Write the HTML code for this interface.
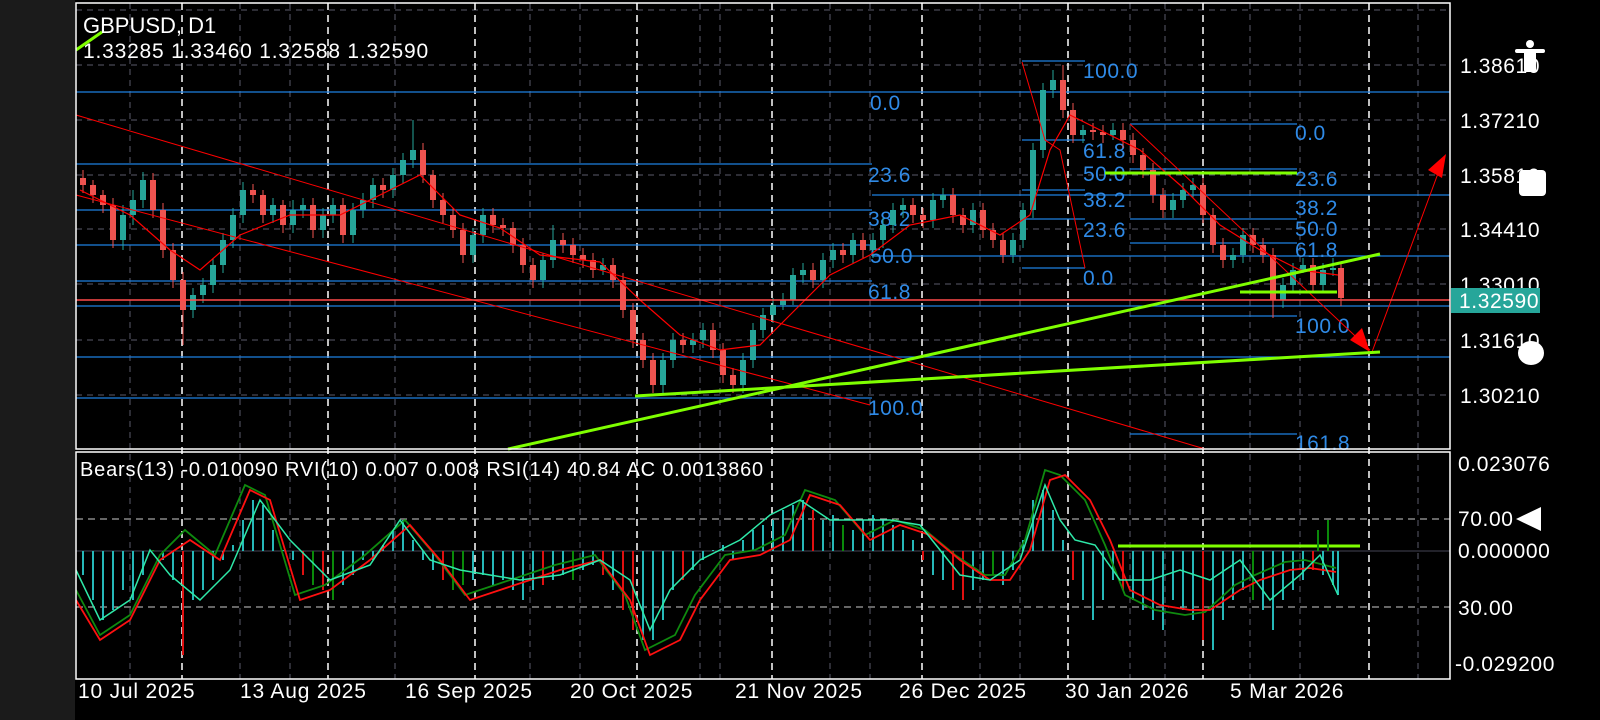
<!DOCTYPE html>
<html><head><meta charset="utf-8"><style>
html,body{margin:0;padding:0;background:#000;width:1600px;height:720px;overflow:hidden}
svg{display:block}
text{font-family:"Liberation Sans",sans-serif}
</style></head><body>
<svg width="1600" height="720" xmlns="http://www.w3.org/2000/svg">
<rect width="1600" height="720" fill="#000"/>
<rect x="0" y="0" width="75" height="720" fill="#1b1b1b"/>
<g stroke="#5a5a6a" stroke-dasharray="6 5" stroke-width="1">
<path d="M130 3V679M240 3V679M290 3V679M395 3V679M530 3V679M580 3V679M700 3V679M720 3V679M830 3V679M870 3V679M980 3V679M1020 3V679M1130 3V679M1165 3V679M1250 3V679M1300 3V679M1418 3V679"/>
<path d="M76 10H1450M76 65H1450M76 120H1450M76 175H1450M76 229H1450M76 284H1450M76 340H1450M76 395H1450"/>
</g>
<path d="M182 3V679M328 3V679M475 3V679M637 3V679M772 3V679M922 3V679M1068 3V679M1203 3V679M1369 3V679" stroke="#fff" stroke-dasharray="7 5" stroke-width="1.5"/>
<path d="M76 519H1450M76 607H1450" stroke="#ccc" stroke-dasharray="7 5"/>
<path d="M76 551H1450" stroke="#445"/>
<g stroke="#1e7fe0" stroke-width="1.2">
<path d="M76 92H1450M76 164H872M76 210H872M76 245H872M76 281H872M76 398H872M872 195H1450M872 256H1450M76 306H1450M76 357H1450M1022 61H1085M1022 140H1085M1022 190H1085M1022 219H1085M1022 268H1085M1130 124H1297M1130 169H1297M1130 219H1297M1130 243H1297M1130 316H1297M1130 434H1297"/>
</g>
<g fill="#2f8ae6" font-size="21" letter-spacing="0.5">
<text x="870" y="110">0.0</text><text x="868" y="182">23.6</text><text x="868" y="226">38.2</text><text x="870" y="263">50.0</text><text x="868" y="299">61.8</text><text x="868" y="415">100.0</text>
<text x="1083" y="78">100.0</text><text x="1083" y="158">61.8</text><text x="1083" y="181">50.0</text><text x="1083" y="207">38.2</text><text x="1083" y="237">23.6</text><text x="1083" y="285">0.0</text>
<text x="1295" y="140">0.0</text><text x="1295" y="186">23.6</text><text x="1295" y="215">38.2</text><text x="1295" y="236">50.0</text><text x="1295" y="257">61.8</text><text x="1295" y="333">100.0</text><text x="1295" y="450">161.8</text>
</g>
<!-- candles -->
<path stroke="#ef5350" stroke-width="1" d="M83 170V193M93 180V203M103 190V213M113 198V248M153 173V218M163 203V258M173 243V288M183 272V345M253 184V203M263 190V223M283 200V233M313 198V238M343 198V243M383 178V198M423 143V183M433 170V208M443 193V223M453 208V238M463 223V263M493 208V233M503 218V236M513 222V253M523 238V273M533 258V288M563 233V253M573 238V263M583 248V268M593 253V278M613 258V288M623 273V318M633 303V348M643 333V368M653 353V393M683 333V353M713 323V358M723 343V383M733 368V393M813 263V288M843 243V263M863 233V258M913 198V223M923 208V228M953 188V223M963 208V233M983 203V238M993 223V248M1003 233V263M1063 65V118M1073 103V143M1093 123V140M1103 125V143M1123 123V148M1133 133V163M1143 148V178M1153 163V203M1163 188V218M1203 178V223M1213 208V253M1223 238V268M1253 228V253M1263 238V263M1273 248V318M1313 258V293M1341 262V306"/>
<path fill="#ef5350" d="M80 178V185H86V178ZM90 185V195H96V185ZM100 195V205H106V195ZM110 205V240H116V205ZM150 180V210H156V180ZM160 210V250H166V210ZM170 250V280H176V250ZM180 280V310H186V280ZM250 190V195H256V190ZM260 195V215H266V195ZM280 205V225H286V205ZM310 205V230H316V205ZM340 205V235H346V205ZM380 185V190H386V185ZM420 150V175H426V150ZM430 175V200H436V175ZM440 200V215H446V200ZM450 215V230H456V215ZM460 230V255H466V230ZM490 215V225H496V215ZM500 225V228H506V225ZM510 228V245H516V228ZM520 245V265H526V245ZM530 265V280H536V265ZM560 240V245H566V240ZM570 245V255H576V245ZM580 255V260H586V255ZM590 260V270H596V260ZM610 265V280H616V265ZM620 280V310H626V280ZM630 310V340H636V310ZM640 340V360H646V340ZM650 360V385H656V360ZM680 340V345H686V340ZM710 330V350H716V330ZM720 350V375H726V350ZM730 375V385H736V375ZM810 270V280H816V270ZM840 250V255H846V250ZM860 240V250H866V240ZM910 205V215H916V205ZM920 215V220H926V215ZM950 195V215H956V195ZM960 215V225H966V215ZM980 210V230H986V210ZM990 230V240H996V230ZM1000 240V255H1006V240ZM1060 80V110H1066V80ZM1070 110V135H1076V110ZM1090 130V132H1096V130ZM1100 132V135H1106V132ZM1120 130V140H1126V130ZM1130 140V155H1136V140ZM1140 155V170H1146V155ZM1150 170V195H1156V170ZM1160 195V210H1166V195ZM1200 185V215H1206V185ZM1210 215V245H1216V215ZM1220 245V260H1226V245ZM1250 235V245H1256V235ZM1260 245V255H1266V245ZM1270 255V300H1276V255ZM1310 265V285H1316V265ZM1338 268V298H1344V268Z"/>
<path stroke="#26a69a" stroke-width="1" d="M123 205V250M133 190V225M143 172V208M193 288V318M203 278V303M213 258V293M223 233V273M233 208V248M243 182V223M273 198V223M293 200V233M303 198V218M323 208V238M333 198V223M353 203V243M363 193V218M373 178V208M393 168V198M403 153V183M413 120V168M473 228V263M483 208V243M543 253V288M553 225V268M603 258V275M663 353V393M673 333V368M693 333V353M703 323V348M743 353V393M753 323V368M763 308V338M773 298V323M783 293V310M793 268V305M803 263V283M823 253V288M833 243V268M853 233V263M873 233V258M883 218V248M893 203V233M903 198V218M933 193V228M943 188V208M973 203V233M1013 233V263M1023 203V248M1033 143V218M1043 83V158M1053 70V98M1083 125V143M1113 123V140M1173 193V218M1183 183V208M1193 178V198M1233 248V268M1243 228V263M1283 278V308M1293 263V293M1303 258V273M1323 263V293M1333 258V276"/>
<path fill="#26a69a" d="M120 215V240H126V215ZM130 200V215H136V200ZM140 180V200H146V180ZM190 295V310H196V295ZM200 285V295H206V285ZM210 265V285H216V265ZM220 240V265H226V240ZM230 215V240H236V215ZM240 190V215H246V190ZM270 205V215H276V205ZM290 210V225H296V210ZM300 205V210H306V205ZM320 215V230H326V215ZM330 205V215H336V205ZM350 210V235H356V210ZM360 200V210H366V200ZM370 185V200H376V185ZM390 175V190H396V175ZM400 160V175H406V160ZM410 150V160H416V150ZM470 235V255H476V235ZM480 215V235H486V215ZM540 260V280H546V260ZM550 240V260H556V240ZM600 265V270H606V265ZM660 360V385H666V360ZM670 340V360H676V340ZM690 340V345H696V340ZM700 330V340H706V330ZM740 360V385H746V360ZM750 330V360H756V330ZM760 315V330H766V315ZM770 305V315H776V305ZM780 300V305H786V300ZM790 275V300H796V275ZM800 270V275H806V270ZM820 260V280H826V260ZM830 250V260H836V250ZM850 240V255H856V240ZM870 240V250H876V240ZM880 225V240H886V225ZM890 210V225H896V210ZM900 205V210H906V205ZM930 200V220H936V200ZM940 195V200H946V195ZM970 210V225H976V210ZM1010 240V255H1016V240ZM1020 210V240H1026V210ZM1030 150V210H1036V150ZM1040 90V150H1046V90ZM1050 80V90H1056V80ZM1080 130V135H1086V130ZM1110 130V135H1116V130ZM1170 200V210H1176V200ZM1180 190V200H1186V190ZM1190 185V190H1196V185ZM1230 255V260H1236V255ZM1240 235V255H1246V235ZM1280 285V300H1286V285ZM1290 270V285H1296V270ZM1300 265V270H1306V265ZM1320 270V285H1326V270ZM1330 268V270H1336V268Z"/>
<g stroke="#f00" stroke-width="1" fill="none">
<path d="M76 115L1205 449M76 195L870 405M1022 62L1045 140L1060 150L1085 268M1130 124L1370 350M1372 352L1440 168"/>
<polyline stroke-width="1.2" points="80,190 130,215 170,250 200,270 240,235 290,215 340,215 390,190 420,175 460,215 500,228 540,255 600,262 640,300 680,335 720,350 760,345 790,315 830,275 870,255 910,225 960,215 1000,235 1030,215 1050,150 1070,115 1100,130 1140,150 1180,185 1220,225 1260,250 1300,270 1338,275"/>
</g>
<polygon points="1370,352 1350,340 1362,328" fill="#f00"/>
<polygon points="1446,154 1428,170 1442,178" fill="#f00"/>
<line x1="76" y1="300" x2="1450" y2="300" stroke="#ff4a4a" stroke-width="1.5"/>
<g stroke="#7fff00" stroke-width="3">
<path d="M635 396L1380 352M508 449L1380 254M76 50L102 32M1240 292H1337M1105 173H1297M1118 546H1360"/>
</g>
<!-- indicator -->
<path stroke="#26b8b8" stroke-width="2" d="M83 551V575M93 551V600M103 551V620M113 551V610M123 551V590M133 551V600M143 551V575M163 551V560M173 551V580M193 551V600M203 551V590M213 551V580M223 551V560M233 551V545M243 551V520M253 551V500M263 551V505M273 551V530M283 551V550M293 551V560M343 551V585M353 551V575M363 551V560M373 551V560M383 551V545M393 551V530M403 551V520M413 551V540M423 551V560M433 551V570M473 551V580M483 551V575M493 551V585M503 551V580M513 551V590M523 551V600M533 551V590M553 551V580M563 551V575M583 551V570M593 551V565M613 551V590M643 551V640M653 551V640M663 551V620M673 551V590M693 551V570M703 551V560M713 551V550M723 551V545M733 551V560M743 551V540M753 551V530M763 551V525M773 551V520M783 551V510M793 551V505M803 551V500M823 551V520M833 551V515M853 551V530M863 551V520M873 551V515M883 551V520M893 551V525M903 551V530M913 551V540M933 551V575M943 551V580M973 551V590M983 551V580M1003 551V585M1013 551V570M1023 551V540M1033 551V500M1043 551V490M1053 551V510M1063 551V540M1083 551V600M1093 551V620M1103 551V600M1113 551V580M1133 551V600M1143 551V610M1153 551V620M1163 551V630M1173 551V600M1183 551V610M1193 551V620M1213 551V650M1223 551V620M1233 551V600M1243 551V590M1263 551V610M1273 551V630M1283 551V600M1293 551V590M1303 551V580M1323 551V575M1333 551V585M1338 551V595"/>
<path stroke="#e01010" stroke-width="2" d="M183 551V655M303 551V575M323 551V590M443 551V580M543 551V585M603 551V575M623 551V610M633 551V630M683 551V580M813 551V510M923 551V560M953 551V590M963 551V600M1073 551V580M1123 551V590M1203 551V640M1253 551V600M1313 551V570"/>
<path stroke="#0a8a0a" stroke-width="2" d="M153 551V550M313 551V585M333 551V600M453 551V590M463 551V585M573 551V580M843 551V525M993 551V575M1253 551V600M1318 551V530M1328 551V520"/>
<g fill="none" stroke-width="1.8">
<polyline stroke="#0f8a0f" points="76,590 100,635 130,615 160,555 185,530 215,555 245,485 265,495 295,595 325,585 365,555 405,520 435,555 465,595 495,585 525,575 555,565 595,555 625,595 645,650 675,635 695,595 725,555 755,550 785,535 805,490 835,500 865,535 895,520 925,530 955,555 985,575 1005,575 1025,540 1045,470 1060,475 1085,500 1105,545 1125,595 1155,610 1185,615 1205,612 1235,585 1255,575 1285,562 1305,560 1336,568"/>
<polyline stroke="#ff1010" points="76,600 100,640 130,620 160,560 190,540 220,560 250,490 270,500 300,600 330,590 370,560 410,525 440,560 470,600 500,590 530,580 560,570 600,560 630,600 650,655 680,640 700,600 730,560 760,555 790,540 810,495 840,505 870,540 900,525 930,535 960,560 990,580 1010,580 1030,550 1050,480 1065,475 1090,500 1110,540 1130,590 1160,605 1190,610 1210,610 1240,590 1260,580 1290,570 1310,568 1336,572"/>
<polyline stroke="#2ee8a8" stroke-width="1.5" points="76,570 100,620 130,600 150,550 170,575 200,600 230,570 260,500 290,540 330,580 370,565 400,520 430,560 460,570 490,575 520,580 560,575 600,560 630,580 650,630 670,590 700,560 740,540 770,515 800,500 830,520 860,520 890,520 920,525 960,575 990,580 1020,560 1045,485 1060,520 1075,540 1095,545 1120,580 1150,580 1180,570 1210,580 1240,560 1270,600 1300,575 1320,555 1338,595"/>
</g>
<rect x="76" y="3" width="1374" height="446" fill="none" stroke="#fff" stroke-width="1.5"/>
<rect x="76" y="452" width="1374" height="227" fill="none" stroke="#fff" stroke-width="1.5"/>
<text x="83" y="33" fill="#fff" font-size="22">GBPUSD, D1</text>
<text x="83" y="58" fill="#fff" font-size="21" letter-spacing="0.8">1.33285 1.33460 1.32588 1.32590</text>
<text x="80" y="476" fill="#fff" font-size="20" letter-spacing="0.8">Bears(13) -0.010090 RVI(10) 0.007 0.008 RSI(14) 40.84 AC 0.0013860</text>
<g fill="#fff" font-size="21" letter-spacing="0.6">
<text x="1460" y="73">1.38610</text><text x="1460" y="128">1.37210</text><text x="1460" y="183">1.35810</text><text x="1460" y="237">1.34410</text><text x="1460" y="292">1.33010</text><text x="1460" y="348">1.31610</text><text x="1460" y="403">1.30210</text>
<text x="1458" y="471">0.023076</text><text x="1458" y="526">70.00</text><text x="1458" y="558">0.000000</text><text x="1458" y="615">30.00</text><text x="1455" y="671">-0.029200</text>
</g>
<rect x="1451" y="288" width="89" height="25" fill="#26a69a"/>
<text x="1459" y="308" fill="#fff" font-size="21" letter-spacing="0.6">1.32590</text>
<g fill="#fff" font-size="21" letter-spacing="0.8">
<text x="78" y="698">10 Jul 2025</text><text x="240" y="698">13 Aug 2025</text><text x="405" y="698">16 Sep 2025</text><text x="570" y="698">20 Oct 2025</text><text x="735" y="698">21 Nov 2025</text><text x="899" y="698">26 Dec 2025</text><text x="1065" y="698">30 Jan 2026</text><text x="1230" y="698">5 Mar 2026</text>
</g>
<g fill="#fff">
<circle cx="1530" cy="44" r="4"/>
<rect x="1515" y="49" width="30" height="4" rx="2"/>
<rect x="1524" y="50" width="12" height="22" rx="2"/>
<rect x="1519" y="170" width="27" height="26" rx="4"/>
<ellipse cx="1531" cy="353" rx="13" ry="12"/>
<polygon points="1516,519 1541,507 1541,531"/>
</g>
</svg>
</body></html>
